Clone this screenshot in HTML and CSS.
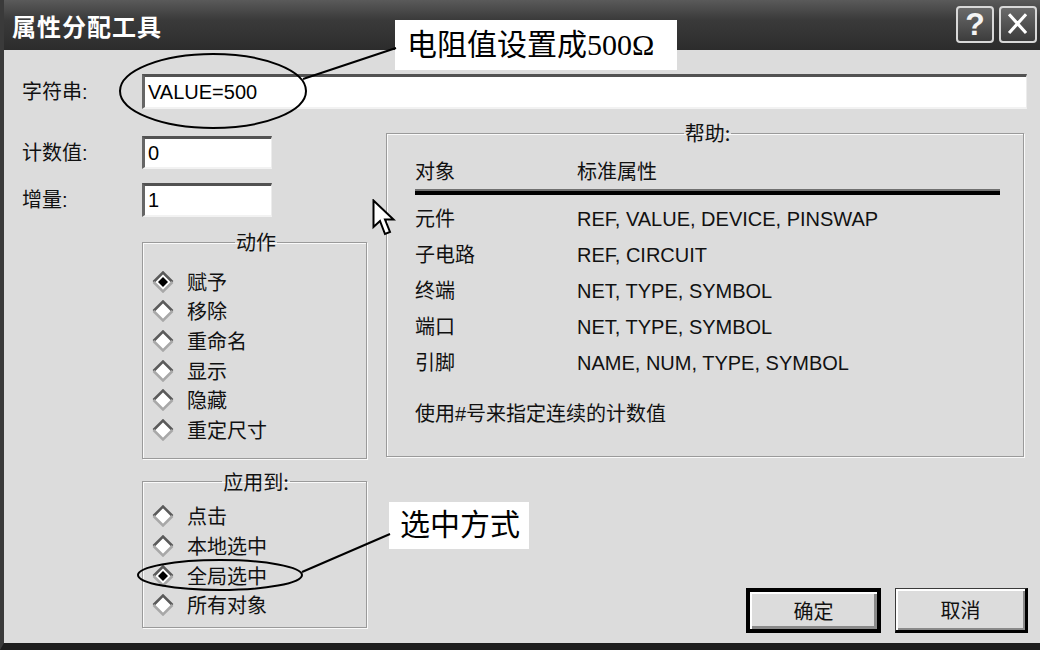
FILE: index.html
```html
<!DOCTYPE html>
<html lang="zh-CN">
<head>
<meta charset="utf-8">
<title>属性分配工具</title>
<link rel="stylesheet" href="styles.css">
</head>
<body>
<div class="window">
  <header class="titlebar">
    <h1 class="title">属性分配工具</h1>
    <div class="tb-buttons">
      <span class="tb-btn tb-help">?</span>
      <span class="tb-btn">
        <svg viewBox="0 0 38 37" width="36" height="35"><path d="M9 7 L28 28 M28 7 L9 28" stroke="#fff" stroke-width="3.5" fill="none"/></svg>
      </span>
    </div>
  </header>

  <main class="content">
    <div class="field field-string">
      <span class="lbl">字符串:</span>
      <div class="input input-wide">VALUE=500</div>
    </div>

    <div class="main">
      <div class="left">
        <div class="field field-count">
          <span class="lbl">计数值:</span>
          <div class="input input-short">0</div>
        </div>
        <div class="field field-inc">
          <span class="lbl">增量:</span>
          <div class="input input-short">1</div>
        </div>

        <fieldset class="group group-action">
          <legend>动作</legend>
          <div class="radio checked"><svg class="dia" viewBox="0 0 22 22" width="22" height="22"><polygon points="11,1.5 20.5,11 11,20.5 1.5,11" fill="#fff"/><polyline points="1.5,11 11,1.5 20.5,11" fill="none" stroke="#5a5a5a" stroke-width="2.5"/><polyline points="1.5,11 11,20.5 20.5,11" fill="none" stroke="#a8a8a8" stroke-width="2.5"/><polygon points="11,6 16,11 11,16 6,11" fill="#000"/></svg><span>赋予</span></div>
          <div class="radio"><svg class="dia" viewBox="0 0 22 22" width="22" height="22"><polygon points="11,1.5 20.5,11 11,20.5 1.5,11" fill="#fff"/><polyline points="1.5,11 11,1.5 20.5,11" fill="none" stroke="#5a5a5a" stroke-width="2.5"/><polyline points="1.5,11 11,20.5 20.5,11" fill="none" stroke="#a8a8a8" stroke-width="2.5"/></svg><span>移除</span></div>
          <div class="radio"><svg class="dia" viewBox="0 0 22 22" width="22" height="22"><polygon points="11,1.5 20.5,11 11,20.5 1.5,11" fill="#fff"/><polyline points="1.5,11 11,1.5 20.5,11" fill="none" stroke="#5a5a5a" stroke-width="2.5"/><polyline points="1.5,11 11,20.5 20.5,11" fill="none" stroke="#a8a8a8" stroke-width="2.5"/></svg><span>重命名</span></div>
          <div class="radio"><svg class="dia" viewBox="0 0 22 22" width="22" height="22"><polygon points="11,1.5 20.5,11 11,20.5 1.5,11" fill="#fff"/><polyline points="1.5,11 11,1.5 20.5,11" fill="none" stroke="#5a5a5a" stroke-width="2.5"/><polyline points="1.5,11 11,20.5 20.5,11" fill="none" stroke="#a8a8a8" stroke-width="2.5"/></svg><span>显示</span></div>
          <div class="radio"><svg class="dia" viewBox="0 0 22 22" width="22" height="22"><polygon points="11,1.5 20.5,11 11,20.5 1.5,11" fill="#fff"/><polyline points="1.5,11 11,1.5 20.5,11" fill="none" stroke="#5a5a5a" stroke-width="2.5"/><polyline points="1.5,11 11,20.5 20.5,11" fill="none" stroke="#a8a8a8" stroke-width="2.5"/></svg><span>隐藏</span></div>
          <div class="radio"><svg class="dia" viewBox="0 0 22 22" width="22" height="22"><polygon points="11,1.5 20.5,11 11,20.5 1.5,11" fill="#fff"/><polyline points="1.5,11 11,1.5 20.5,11" fill="none" stroke="#5a5a5a" stroke-width="2.5"/><polyline points="1.5,11 11,20.5 20.5,11" fill="none" stroke="#a8a8a8" stroke-width="2.5"/></svg><span>重定尺寸</span></div>
        </fieldset>

        <fieldset class="group group-apply">
          <legend>应用到:</legend>
          <div class="radio"><svg class="dia" viewBox="0 0 22 22" width="22" height="22"><polygon points="11,1.5 20.5,11 11,20.5 1.5,11" fill="#fff"/><polyline points="1.5,11 11,1.5 20.5,11" fill="none" stroke="#5a5a5a" stroke-width="2.5"/><polyline points="1.5,11 11,20.5 20.5,11" fill="none" stroke="#a8a8a8" stroke-width="2.5"/></svg><span>点击</span></div>
          <div class="radio"><svg class="dia" viewBox="0 0 22 22" width="22" height="22"><polygon points="11,1.5 20.5,11 11,20.5 1.5,11" fill="#fff"/><polyline points="1.5,11 11,1.5 20.5,11" fill="none" stroke="#5a5a5a" stroke-width="2.5"/><polyline points="1.5,11 11,20.5 20.5,11" fill="none" stroke="#a8a8a8" stroke-width="2.5"/></svg><span>本地选中</span></div>
          <div class="radio checked"><svg class="dia" viewBox="0 0 22 22" width="22" height="22"><polygon points="11,1.5 20.5,11 11,20.5 1.5,11" fill="#fff"/><polyline points="1.5,11 11,1.5 20.5,11" fill="none" stroke="#5a5a5a" stroke-width="2.5"/><polyline points="1.5,11 11,20.5 20.5,11" fill="none" stroke="#a8a8a8" stroke-width="2.5"/><polygon points="11,6 16,11 11,16 6,11" fill="#000"/></svg><span>全局选中</span></div>
          <div class="radio"><svg class="dia" viewBox="0 0 22 22" width="22" height="22"><polygon points="11,1.5 20.5,11 11,20.5 1.5,11" fill="#fff"/><polyline points="1.5,11 11,1.5 20.5,11" fill="none" stroke="#5a5a5a" stroke-width="2.5"/><polyline points="1.5,11 11,20.5 20.5,11" fill="none" stroke="#a8a8a8" stroke-width="2.5"/></svg><span>所有对象</span></div>
        </fieldset>
      </div>

      <div class="right">
        <fieldset class="group help">
          <legend>帮助:</legend>
          <div class="help-row help-head"><span class="c1">对象</span><span class="c2">标准属性</span></div>
          <div class="help-rule"></div>
          <div class="help-row"><span class="c1">元件</span><span class="c2">REF, VALUE, DEVICE, PINSWAP</span></div>
          <div class="help-row"><span class="c1">子电路</span><span class="c2">REF, CIRCUIT</span></div>
          <div class="help-row"><span class="c1">终端</span><span class="c2">NET, TYPE, SYMBOL</span></div>
          <div class="help-row"><span class="c1">端口</span><span class="c2">NET, TYPE, SYMBOL</span></div>
          <div class="help-row"><span class="c1">引脚</span><span class="c2">NAME, NUM, TYPE, SYMBOL</span></div>
          <p class="help-note">使用#号来指定连续的计数值</p>
        </fieldset>
        <div class="buttons">
          <span class="btn btn-default">确定</span>
          <span class="btn btn-cancel">取消</span>
        </div>
      </div>
    </div>
  </main>

  <div class="note note-1">电阻值设置成500Ω</div>
  <div class="note note-2">选中方式</div>

  <svg class="marks" viewBox="0 0 1040 650" width="1040" height="650">
    <ellipse cx="213" cy="91" rx="93" ry="37" fill="none" stroke="#000" stroke-width="2"/>
    <line x1="303" y1="79" x2="396" y2="48" stroke="#000" stroke-width="2"/>
    <ellipse cx="220" cy="575" rx="82" ry="15" fill="none" stroke="#000" stroke-width="2"/>
    <line x1="302" y1="572" x2="390" y2="534" stroke="#000" stroke-width="2"/>
  </svg>

  <svg class="cursor" viewBox="0 0 24 40" width="24" height="40">
    <path d="M1.5 1.5 L1.5 28 L8 22 L13 35 L18 33 L13 20.5 L21.5 20.5 Z" fill="#fff" stroke="#000" stroke-width="2" stroke-linejoin="miter"/>
  </svg>
</div>
</body>
</html>
```

FILE: styles.css
```css
* { box-sizing: border-box; }

html, body {
  margin: 0;
  padding: 0;
  background: #dcdcdc;
}

body {
  font-family: "Liberation Sans", "Noto Sans CJK SC", sans-serif;
  font-size: 20px;
  color: #111;
}

.window {
  position: relative;
  width: 1040px;
  height: 650px;
  background: #dcdcdc;
  border-left: 4px solid #3a3a3a;
  border-bottom: 7px solid #1e1e1e;
  overflow: hidden;
}

/* title bar */
.titlebar {
  height: 50px;
  display: flex;
  justify-content: space-between;
  align-items: flex-start;
  background: linear-gradient(#5a5a5a, #3a3a3a 40%, #2c2c2c);
  padding: 0 3px 0 8px;
}

.title {
  margin: 0;
  color: #fff;
  font-family: "Noto Sans CJK SC", sans-serif;
  font-size: 24px;
  font-weight: 700;
  line-height: 52px;
  letter-spacing: 1px;
}

.tb-buttons {
  display: flex;
  gap: 5px;
  padding-top: 6px;
}

.tb-btn {
  width: 38px;
  height: 37px;
  border: 2px solid #d8d8d8;
  border-radius: 4px;
  background: linear-gradient(#6a6a6a, #3c3c3c);
  color: #fff;
  display: flex;
  align-items: center;
  justify-content: center;
  overflow: hidden;
}

.tb-help {
  font-family: "Liberation Sans", sans-serif;
  font-size: 32px;
  font-weight: 700;
  color: #f4f4f4;
}

/* content */
.content {
  padding: 24px 12px 0 18px;
}

.field {
  display: flex;
  align-items: center;
}

.lbl {
  width: 120px;
  flex: none;
  line-height: 20px;
}

.input {
  background: #fff;
  border-style: solid;
  border-width: 3px 1px 2px 3px;
  border-color: #525252 #ececec #f2f2f2 #666;
  padding: 0 3px;
  line-height: 28px;
  color: #000;
}

.field-string .input {
  height: 35px;
  flex: 1;
  margin-right: 1px;
  line-height: 30px;
}

.input-short {
  width: 130px;
  height: 33px;
}

.field-count { height: 33px; }
.field-inc { height: 34px; margin-top: 14px; }
.field-inc .input { height: 34px; }

.main {
  display: flex;
  gap: 19px;
  margin-top: 27px;
}

.left {
  width: 345px;
  flex: none;
}

.right {
  flex: 1;
  margin-top: -13px;
}

/* group boxes */
.group {
  margin: 0;
  border: 1px solid #9a9a9a;
  box-shadow: 1px 1px 0 #fafafa, inset 1px 1px 0 #fafafa;
  min-width: 0;
}

.group legend {
  margin: 0 auto;
  padding: 0 1px;
  line-height: 20px;
  font-family: "Noto Sans CJK SC", sans-serif;
}

.group-action {
  margin: 15px 0 0 120px;
  width: 225px;
  padding: 15px 6px 13px 9px;
}

.group-apply {
  margin: 13px 0 0 120px;
  width: 225px;
  padding: 10px 6px 7px 9px;
}

.radio {
  height: 29.6px;
  display: flex;
  align-items: center;
  gap: 13px;
  line-height: 20px;
  font-family: "Noto Sans CJK SC", sans-serif;
}

.dia { flex: none; display: block; }

/* help */
.help {
  margin-right: 4px;
  padding: 11px 23px 24px 28px;
}

.help-row {
  height: 36px;
  display: flex;
  align-items: center;
  line-height: 20px;
}

.help-head { height: 35px; }

.c1 {
  width: 162px;
  flex: none;
}

.c2 { white-space: nowrap; }

.help-rule {
  height: 6px;
  border-top: 2px solid #707070;
  background: #000;
}

.help-rule + .help-row { margin-top: 6px; }

.help-note {
  margin: 15px 0 0;
  line-height: 36px;
}

/* buttons */
.buttons {
  display: flex;
  justify-content: flex-end;
  gap: 14px;
  margin-top: 131px;
}

.btn {
  height: 45px;
  display: flex;
  align-items: center;
  justify-content: center;
  background: #dcdcdc;
  font-family: "Noto Sans CJK SC", sans-serif;
  line-height: 20px;
}

.btn-default {
  width: 135px;
  border: 4px solid #000;
  box-shadow: inset 2px 2px 0 #fff, inset -3px -3px 0 #8a8a8a;
}

.btn-cancel {
  width: 133px;
  border-style: solid;
  border-width: 1px 3px 3px 1px;
  border-color: #3a3a3a #000 #000 #3a3a3a;
  box-shadow: inset 2px 2px 0 #fff, inset -2px -2px 0 #8a8a8a;
}

/* annotations (overlay) */
.note {
  position: absolute;
  background: #fff;
  color: #000;
  font-family: "Liberation Serif", "Noto Sans CJK SC", serif;
  white-space: nowrap;
}

.note-1 {
  left: 391px;
  top: 20px;
  width: 282px;
  height: 50px;
  padding-left: 12px;
  font-size: 30px;
  line-height: 50px;
}

.note-2 {
  left: 385px;
  top: 502px;
  width: 140px;
  height: 47px;
  padding-left: 11px;
  font-size: 30px;
  line-height: 46px;
}

.marks {
  position: absolute;
  left: -4px;
  top: 0;
  pointer-events: none;
}

.cursor {
  position: absolute;
  left: 368px;
  top: 199px;
}
```
